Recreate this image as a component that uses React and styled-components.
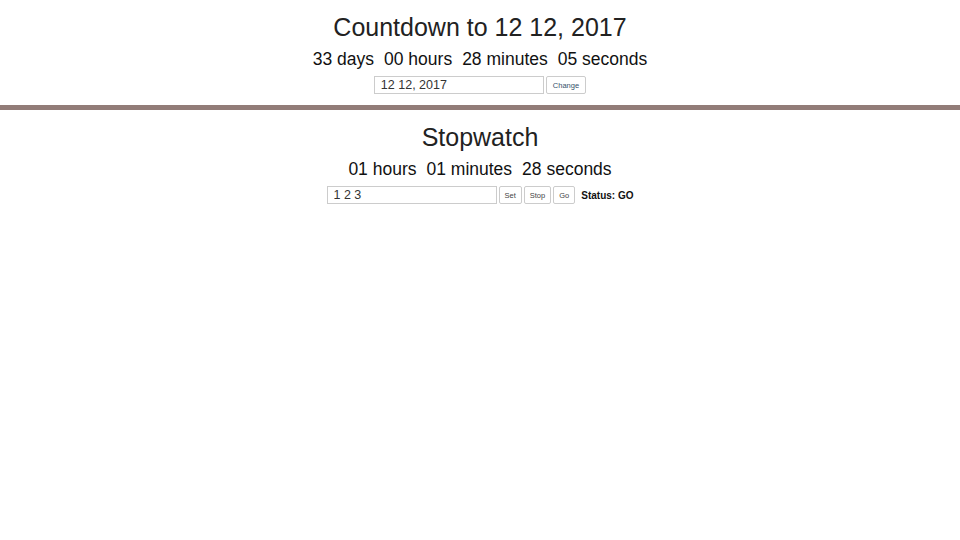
import React from "react";
import styled, { createGlobalStyle } from "styled-components";

const GlobalStyle = createGlobalStyle`
  body {
    margin: 0;
    background: #fff;
    font-family: "Liberation Sans", Arial, sans-serif;
    color: #222;
  }
`;

const Section = styled.section`
  display: flex;
  flex-direction: column;
  align-items: center;
  padding-top: 13px;
  padding-bottom: ${(p) => p.$bottom}px;
`;

const Title = styled.h1`
  margin: 0;
  font-size: 25px;
  font-weight: normal;
  line-height: 28px;
  color: #222;
`;

const Clock = styled.div`
  display: flex;
  gap: 10px;
  margin-top: 7px;
  font-size: 17.5px;
  line-height: 22px;
  color: #111;
`;

const Controls = styled.div`
  display: flex;
  align-items: center;
  gap: 2px;
  margin-top: 6px;
`;

const TextInput = styled.input`
  box-sizing: border-box;
  width: 170px;
  height: 18px;
  padding: 0 6px;
  border: 1px solid #ccc;
  font-family: "Liberation Sans", Arial, sans-serif;
  font-size: 12.5px;
  color: #333;
  outline: none;
`;

const Button = styled.button`
  box-sizing: border-box;
  height: 18px;
  padding: 0 ${(p) => p.$pad || 5}px;
  border: 1px solid #ccc;
  border-radius: 2px;
  background: #fff;
  font-family: "Liberation Sans", Arial, sans-serif;
  font-size: 7.5px;
  color: ${(p) => p.$color || "#444"};
`;

const Status = styled.span`
  margin-left: 4px;
  font-size: 10px;
  font-weight: bold;
  color: #111;
`;

const Divider = styled.hr`
  margin: 0;
  border: none;
  height: 5px;
  background: #927c78;
`;

export default function App() {
  return (
    <>
      <GlobalStyle />
      <Section $bottom={11}>
        <Title>Countdown to 12 12, 2017</Title>
        <Clock>
          <span>33 days</span>
          <span>00 hours</span>
          <span>28 minutes</span>
          <span>05 seconds</span>
        </Clock>
        <Controls>
          <TextInput defaultValue="12 12, 2017" />
          <Button $pad={6} $color="#34506a">Change</Button>
        </Controls>
      </Section>
      <Divider />
      <Section $bottom={12}>
        <Title>Stopwatch</Title>
        <Clock>
          <span>01 hours</span>
          <span>01 minutes</span>
          <span>28 seconds</span>
        </Clock>
        <Controls>
          <TextInput defaultValue="1 2 3" />
          <Button>Set</Button>
          <Button>Stop</Button>
          <Button>Go</Button>
          <Status>Status: GO</Status>
        </Controls>
      </Section>
    </>
  );
}
